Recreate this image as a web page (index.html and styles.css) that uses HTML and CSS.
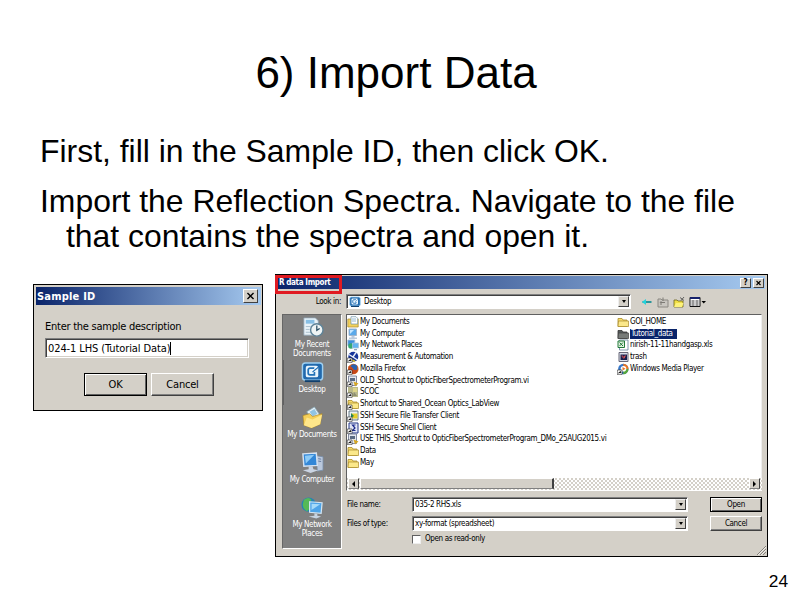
FILE: index.html
```html
<!DOCTYPE html>
<html lang="en">
<head>
    <meta charset="UTF-8">
    <meta name="viewport" content="width=device-width, initial-scale=1.0">
    <title>6) Import Data</title>
    <link rel="stylesheet" href="styles.css">
</head>
<body>
    <svg class="defs" width="0" height="0">
        <symbol id="folder" viewBox="0 0 12 12">
            <path d="M1 2.5h4l1 1.5h4v6.5H1z" fill="#f6dc6c" stroke="#a98b2c" stroke-width=".8"/>
            <path d="M1 10.5 1.5 5H11.500v5.500z" fill="#fbe88a" stroke="#a98b2c" stroke-width=".7"/>
        </symbol>
        <symbol id="folder-dark" viewBox="0 0 12 12">
            <path d="M1 2.5h4l1 1.5h4v6.5H1z" fill="#555b5b" stroke="#333" stroke-width=".8"/>
            <path d="M1 10.5 1.5 5H11.500v5.500z" fill="#777b78" stroke="#444" stroke-width=".7"/>
        </symbol>
        <symbol id="docs" viewBox="0 0 12 12">
            <path d="M.8 3h10.4v8H.8z" fill="#f2d15c" stroke="#a98b2c" stroke-width=".7"/>
            <path d="M4 .7h5l1.6 1.6V8H4z" fill="#fff" stroke="#6f93a8" stroke-width=".7"/>
            <path d="M5 3h4M5 5h4" stroke="#7aa7c8" stroke-width=".8"/>
        </symbol>
        <symbol id="computer" viewBox="0 0 12 12">
            <path d="M2 1h7.5v6.5H2z" fill="#5aa9ea" stroke="#9fb6cf"/>
            <path d="M3 2h4L3 6z" fill="#c4e6ff"/>
            <path d="M4.5 8h3v1.5h2.5v1.5H2V9.500h2.500z" fill="#b9c9dc"/>
        </symbol>
        <symbol id="network" viewBox="0 0 12 12">
            <path d="M.8 1h7v5.500h-7z" fill="#3d8fdc" stroke="#a9c4dc" stroke-width=".8"/>
            <circle cx="4" cy="7" r="2.800" fill="#35a872"/>
            <path d="M5.500 4h6v5h-6z" fill="#62b4f0" stroke="#a9c4dc" stroke-width=".8"/>
            <path d="M7 10h3v1.300H7z" fill="#8da6bd"/>
        </symbol>
        <symbol id="arrow" viewBox="0 0 12 12">
            <path d="M.3 7h4.700v4.700H.3z" fill="#fff" stroke="#222" stroke-width=".6"/>
            <path d="M1.400 10.800C1.300 9 2 8.700 3 8.700V7.800L4.500 9.200 3 10.500V9.700" fill="#111"/>
        </symbol>
        <symbol id="globe" viewBox="0 0 12 12">
            <circle cx="6.300" cy="5.800" r="5" fill="#17349a"/>
            <path d="M2 3.500 6 6 9 1.500M6 6l4.500 3" stroke="#e9eef8" stroke-width="1.400" fill="none"/>
            <path d="M3 8 8 10.500" stroke="#d9c42e" stroke-width="1.500"/>
        </symbol>
        <symbol id="firefox" viewBox="0 0 12 12">
            <circle cx="6.300" cy="6" r="5.300" fill="#d9641c"/>
            <circle cx="6.800" cy="4.800" r="3.500" fill="#2a62b0"/>
            <path d="M1.500 3c2 1 3 0 4 2s3 3 5.500 1c-1 4-3 5-5 5s-4-1-4.500-4z" fill="#c4471c"/>
        </symbol>
        <symbol id="vi" viewBox="0 0 12 12">
            <path d="M1.500 1h8v9.500h-8z" fill="#e4e8ef" stroke="#66708a" stroke-width=".8"/>
            <path d="M3 3h5v3H3z" fill="#5a6a82"/>
            <path d="M6.500 6.500 11.500 8.500 8 11.500z" fill="#d6a722"/>
        </symbol>
        <symbol id="scoc" viewBox="0 0 12 12">
            <path d="M1 1h10v10H1z" fill="#b9b98c"/>
            <path d="M6 2h4v4H6z" fill="#ddd58a"/>
            <path d="M7 6 10 10H6z" fill="#8d8e72"/>
        </symbol>
        <symbol id="ssh" viewBox="0 0 12 12">
            <path d="M2 1h9v9H2z" fill="#e8eef4" stroke="#47606e" stroke-width=".8"/>
            <path d="M4.500 3.500h6v5h-6z" fill="#e5cf2b"/>
            <path d="M4 3 7 6 4 8z" fill="#248556"/>
        </symbol>
        <symbol id="shell" viewBox="0 0 12 12">
            <path d="M2 1h9v10H2z" fill="#e2e6f5" stroke="#233687"/>
            <path d="M8.500 3H5.500L8 6 5.500 8.500h3" stroke="#1c2c8c" stroke-width="1.200" fill="none"/>
        </symbol>
        <symbol id="xls" viewBox="0 0 12 12">
            <path d="M2.500 1h8.500v10H2.500z" fill="#fff" stroke="#5f7e9b" stroke-width=".8"/>
            <path d="M1 2h6.500v6.500H1z" fill="#dff0df" stroke="#227a3b"/>
            <path d="m2.500 3.500 3.500 3.500m0-3.500L2.500 7" stroke="#227a3b"/>
        </symbol>
        <symbol id="trash" viewBox="0 0 12 12">
            <path d="M2 1.500h9v9H2z" fill="#d9dde8" stroke="#667"/>
            <path d="M3.500 3.500H10V9H3.500z" fill="#151e4c"/>
            <path d="M4.500 5h1.500v2h1.500V5H9" stroke="#e55" stroke-width=".8" fill="none"/>
        </symbol>
        <symbol id="player" viewBox="0 0 12 12">
            <circle cx="6.300" cy="6" r="5.200" fill="#3a79c9"/>
            <path d="M6.300.8a5.200 5.200 0 0 1 5.200 5.200H6.300z" fill="#e77524"/>
            <path d="M11.500 6a5.200 5.200 0 0 1-5.200 5.200V6z" fill="#58a83b"/>
            <circle cx="6.500" cy="5.800" r="2.800" fill="#fff"/>
            <path d="m5.500 4 3 1.800-3 1.800z" fill="#e77524"/>
        </symbol>
        <symbol id="desktop" viewBox="0 0 24 24">
            <rect x="1.500" y="2" width="21" height="18" rx="3" fill="#2169ad" stroke="#9ed0f2" stroke-width="1.500"/>
            <path d="M4 21h16" stroke="#12406d" stroke-width="2"/>
            <rect x="5" y="5" width="13" height="12" rx="2" fill="#e9f5fd"/>
            <path d="M14 7.500H9.500c-1.500 0-2 1-2 2v3c0 1.500.5 2 2 2H14v-3" stroke="#2272b8" stroke-width="1.800" fill="none"/>
            <path d="m12 11 5-4" stroke="#fff" stroke-width="2.400"/>
            <path d="m12 11.500 6-5" stroke="#2272b8" stroke-width="1.200"/>
        </symbol>
    </svg>

    <main class="slide">
        <h1>6) Import Data</h1>
        <p class="step first">First, fill in the Sample ID, then click OK.</p>
        <p class="step second">Import the Reflection Spectra. Navigate to the file<br><span>that contains the spectra and open it.</span></p>

        <div class="figures">
            <section class="window sample">
                <div class="titlebar">
                    <span>Sample ID</span>
                    <svg class="close" viewBox="0 0 15 13"><path d="m4 3 7 7m0-7-7 7" stroke="#000" stroke-width="1.600"/></svg>
                </div>
                <div class="sample-body">
                    <label>Enter the sample description</label>
                    <div class="field"><span>024-1 LHS (Tutorial Data)</span><i class="caret"></i></div>
                    <div class="actions">
                        <div class="btn default">OK</div>
                        <div class="btn cancel">Cancel</div>
                    </div>
                </div>
            </section>

            <section class="window import">
                <div class="titlebar">
                    <span>R data Import</span>
                    <div class="title-buttons"><b>?</b><b><svg viewBox="0 0 10 10"><path d="m2.500 2.500 5 5m0-5-5 5" stroke="#000" stroke-width="1.400"/></svg></b></div>
                    <div class="highlight"></div>
                </div>

                <div class="lookin">
                    <label>Look in:</label>
                    <div class="combo">
                        <svg class="ico"><use href="#desktop"/></svg>
                        <span>Desktop</span>
                        <i class="drop"></i>
                    </div>
                    <div class="tools">
                        <svg viewBox="0 0 12 12"><path d="M1.500 6h9" stroke="#1b8f96" stroke-width="1.800"/><path d="M1 6 5 3v6z" fill="#23d3dc"/></svg>
                        <svg viewBox="0 0 12 12"><path d="M1 3h3l1 1h6v7H1z" fill="#c9c6c0" stroke="#8b8882"/><path d="M4 9V6.500h4M6 1.500V5M3 7l1-1.500L5.500 7" stroke="#7d7a75" fill="none"/></svg>
                        <svg viewBox="0 0 12 12"><path d="M1 4h3l1 1h5v6H1z" fill="#f1df45" stroke="#6d661c" stroke-width=".8"/><path d="m7 1.500 4 3M11 1 8 4.500" stroke="#444" stroke-width=".8"/><path d="m1 11 2-4h7.500L9 11z" fill="#fdf27b"/></svg>
                        <svg class="views" viewBox="0 0 17 12"><path d="M1 1.500h10v9H1z" fill="#fff" stroke="#111"/><path d="M1 2h10" stroke="#16216b" stroke-width="2"/><path d="M2.500 5h3m1 0h3m-7 2h3m1 0h3m-7 2h3m1 0h3" stroke="#333"/><path d="M12.500 5h4.500l-2.250 2.500z"/></svg>
                    </div>
                </div>

                <div class="browser">
                    <nav class="places">
                        <div class="place">
                            <svg viewBox="0 0 24 24"><path d="M3 2h12l3 3v15H3z" fill="#e8f2f8" stroke="#8fa5b6" stroke-width=".8"/><path d="M5 4h9v4H5z" fill="#87bfe5"/><path d="M5 11h5m-5 3h4m-4 3h5" stroke="#a9bfce"/><circle cx="16.500" cy="14.500" r="6.500" fill="#eef4f5" stroke="#5e8398" stroke-width="1.500"/><path d="M16.500 10v5l3-2" stroke="#284c62" stroke-width="1.300" fill="none"/></svg>
                            <span>My Recent<br>Documents</span>
                        </div>
                        <div class="place selected">
                            <svg><use href="#desktop"/></svg>
                            <span>Desktop</span>
                        </div>
                        <div class="place">
                            <svg viewBox="0 0 24 24"><path d="m6 6 8-5 6 9-5 8z" fill="#e5f1f8" stroke="#8aabba" stroke-width=".8"/><path d="m9 6 5-3 3 5-5 3z" fill="#91c4e2"/><path d="m2 10 7-2 3 3 10-3-2 11-9 4-8-3z" fill="#f5cf58" stroke="#aa8628" stroke-width=".7"/><path d="m3 20 3-8 6 2 10-5-2 10-9 4z" fill="#ffe78b"/></svg>
                            <span>My Documents</span>
                        </div>
                        <div class="place">
                            <svg viewBox="0 0 24 24"><path d="m16 5 7 1v14l-6 1z" fill="#bac8dc" stroke="#7489a5" stroke-width=".8"/><path d="m18 8 3 .5m-3 2 3 .5" stroke="#647aa0"/><path d="m2 3 14-1 1 13-14 1z" fill="#3387d7" stroke="#d5e2f1" stroke-width="1.500"/><path d="m4 5 10-1L5 13z" fill="#8dcbf7"/><path d="m8 16 4 0 1 3 5 1-8 3-8-3 6-1z" fill="#cad4e3"/></svg>
                            <span>My Computer</span>
                        </div>
                        <div class="place">
                            <svg viewBox="0 0 24 24"><circle cx="8" cy="9" r="7.500" fill="#2583b4"/><path d="M3 4q5-4 8 0L8 8l3 4-5 4q-5-4-4-8z" fill="#55b957"/><path d="m9 6 13 1-1 11-12-1z" fill="#4da4e8" stroke="#d2e5f2" stroke-width="1.300"/><path d="m11 8 9 .5-9 6z" fill="#a5daf9"/><path d="m14 18 3 .5v2l4 1-5 2-8-2 6-1z" fill="#c6d4e2"/></svg>
                            <span>My Network<br>Places</span>
                        </div>
                    </nav>

                    <div class="filepane">
                        <div class="files">
                            <ul>
                                <li><svg><use href="#docs"/></svg><span>My Documents</span></li>
                                <li><svg><use href="#computer"/></svg><span>My Computer</span></li>
                                <li><svg><use href="#network"/></svg><span>My Network Places</span></li>
                                <li><svg><use href="#globe"/><use href="#arrow"/></svg><span>Measurement &amp; Automation</span></li>
                                <li><svg><use href="#firefox"/><use href="#arrow"/></svg><span>Mozilla Firefox</span></li>
                                <li><svg><use href="#vi"/><use href="#arrow"/></svg><span>OLD_Shortcut to OpticFiberSpectrometerProgram.vi</span></li>
                                <li><svg><use href="#scoc"/><use href="#arrow"/></svg><span>SCOC</span></li>
                                <li><svg><use href="#folder"/><use href="#arrow"/></svg><span>Shortcut to Shared_Ocean Optics_LabView</span></li>
                                <li><svg><use href="#ssh"/><use href="#arrow"/></svg><span>SSH Secure File Transfer Client</span></li>
                                <li><svg><use href="#shell"/><use href="#arrow"/></svg><span>SSH Secure Shell Client</span></li>
                                <li><svg><use href="#vi"/><use href="#arrow"/></svg><span>USE THIS_Shortcut to OpticFiberSpectrometerProgram_DMo_25AUG2015.vi</span></li>
                                <li><svg><use href="#folder"/></svg><span>Data</span></li>
                                <li><svg><use href="#folder"/></svg><span>May</span></li>
                            </ul>
                            <ul>
                                <li><svg><use href="#folder"/></svg><span>GOI_HOME</span></li>
                                <li class="active"><svg><use href="#folder-dark"/></svg><span>Tutorial_data</span></li>
                                <li><svg><use href="#xls"/></svg><span>nirish-11-11handgasp.xls</span></li>
                                <li><svg><use href="#trash"/></svg><span>trash</span></li>
                                <li><svg><use href="#player"/><use href="#arrow"/></svg><span>Windows Media Player</span></li>
                            </ul>
                        </div>
                        <div class="scrollbar">
                            <i class="left"></i>
                            <div class="thumb"></div>
                            <i class="right"></i>
                        </div>
                        <div class="form">
                            <label>File name:</label>
                            <div class="combo"><span>035-2 RHS.xls</span><i class="drop"></i></div>
                            <div class="btn default">Open</div>
                            <label>Files of type:</label>
                            <div class="combo"><span>xy-format (spreadsheet)</span><i class="drop"></i></div>
                            <div class="btn">Cancel</div>
                        </div>
                        <div class="readonly"><i class="check"></i><span>Open as read-only</span></div>
                    </div>
                </div>
                <svg class="grip" viewBox="0 0 9 9"><path d="M0 9 9 0M3 9 9 3M6 9 9 6" stroke="#85817a"/><path d="m1 9 8-8M4 9l5-5" stroke="#fff" stroke-width=".6"/></svg>
            </section>
        </div>
        <div class="page-number">24</div>
    </main>
</body>
</html>
```
FILE: styles.css
```css
* {
    box-sizing: border-box;
}
body {
    margin: 0;
    background: #fff;
    color: #000;
    font-family: "Liberation Sans", Arial, sans-serif;
}
.defs {
    position: absolute;
}
.slide {
    position: relative;
    width: 794px;
    height: 595px;
    overflow: hidden;
    padding-top: 48px;
}
h1 {
    margin: 0;
    padding-right: 2px;
    height: 50px;
    font-size: 44px;
    line-height: 50px;
    font-weight: 400;
    text-align: center;
}
.step {
    margin: 0 0 0 40px;
    font-size: 31.900px;
    line-height: 35px;
    white-space: nowrap;
}
.first {
    margin-top: 36px;
}
.second {
    margin-top: 15px;
}
.second span {
    margin-left: 26px;
}
.figures {
    display: flex;
    align-items: flex-start;
    gap: 12px;
    margin: 20px 0 0 33px;
}
.window {
    background: #d4d0c8;
    border: 1px solid #000;
    font-family: "DejaVu Sans Condensed", "DejaVu Sans", sans-serif;
}
.titlebar {
    display: flex;
    align-items: center;
    justify-content: space-between;
    color: #fff;
    font-weight: bold;
    background: linear-gradient(90deg, #0a246a, #a6caf0);
}

/* sample id dialog */
.sample {
    width: 230px;
    height: 127px;
    margin-top: 10px;
    padding: 2px 1px 0 2px;
    border-width: 1px 1.500px 1.500px 1px;
    font-size: 11px;
}
.sample .titlebar {
    height: 18px;
    padding: 0 3px 0 1px;
    letter-spacing: 0.2px;
}
.close {
    width: 15px;
    height: 14px;
    background: #d4d0c8;
    border: 1px solid #fff;
    border-right-color: #404040;
    border-bottom-color: #404040;
}
.sample-body {
    padding: 15px 12px 0 9px;
}
.sample-body label {
    display: block;
    line-height: 13px;
    letter-spacing: -0.250px;
}
.field {
    display: flex;
    align-items: center;
    height: 20px;
    margin-top: 5px;
    padding-left: 2px;
    background: #fff;
    border: 1px solid #808080;
    border-right-color: #fff;
    border-bottom-color: #fff;
    box-shadow: inset 1px 1px #404040, inset -1px -1px #d4d0c8;
    letter-spacing: -0.100px;
}
.caret {
    width: 1px;
    height: 13px;
    background: #000;
}
.actions {
    display: flex;
    gap: 4px;
    margin: 15px 0 0 39px;
}
.btn {
    display: flex;
    align-items: center;
    justify-content: center;
    background: #d4d0c8;
    border: 1px solid #fff;
    border-right-color: #404040;
    border-bottom-color: #404040;
    box-shadow: inset -1px -1px #808080;
}
.btn.default {
    border-color: #000;
    box-shadow: inset 1px 1px #fff, inset -1px -1px #606060;
}
.sample .btn {
    width: 63px;
    height: 23px;
    letter-spacing: -0.200px;
}

/* file dialog */
.import {
    position: relative;
    width: 493px;
    height: 283px;
    padding: 1px 2px 0;
    font-size: 8px;
    line-height: 10px;
    letter-spacing: -0.360px;
}
.import .titlebar {
    position: relative;
    height: 13px;
    padding: 0 1px 0 1px;
}
.highlight {
    position: absolute;
    left: -3px;
    top: -1px;
    width: 67px;
    height: 19px;
    border: 3px solid #e01b22;
}
.title-buttons {
    display: flex;
    gap: 2px;
}
.title-buttons b {
    width: 11px;
    height: 10px;
    background: #d4d0c8;
    border: 1px solid #fff;
    border-right-color: #404040;
    border-bottom-color: #404040;
    color: #000;
    font-size: 8px;
    line-height: 8px;
    text-align: center;
}
.title-buttons svg {
    display: block;
    width: 9px;
    height: 8px;
}
.lookin {
    display: flex;
    align-items: center;
    height: 15px;
    margin-top: 5px;
}
.lookin label {
    width: 68px;
    padding-right: 5px;
    text-align: right;
}
.combo {
    display: flex;
    align-items: center;
    height: 15px;
    padding: 0 1px 0 2px;
    background: #fff;
    border: 1px solid #808080;
    border-right-color: #fff;
    border-bottom-color: #fff;
    box-shadow: inset 1px 1px #404040;
}
.lookin .combo {
    width: 285px;
}
.ico {
    width: 12px;
    height: 12px;
    margin-right: 3px;
}
.drop {
    display: flex;
    align-items: center;
    justify-content: center;
    width: 11px;
    height: 11px;
    margin-left: auto;
    background: #d4d0c8;
    border: 1px solid #eee;
    border-right-color: #404040;
    border-bottom-color: #404040;
}
.drop::after {
    content: "";
    border: 2.500px solid transparent;
    border-top: 3px solid #000;
    border-bottom: 0;
}
.tools {
    display: flex;
    gap: 4px;
    margin-left: 10px;
}
.tools svg {
    width: 12px;
    height: 12px;
}
.tools .views {
    width: 17px;
}
.browser {
    display: flex;
    gap: 4px;
    margin: 5px 0 0 4px;
}
.places {
    width: 60px;
    height: 235px;
    background: #808080;
    border: 1px solid #666;
    border-right-color: #fff;
    border-bottom-color: #fff;
}
.place {
    display: flex;
    flex-direction: column;
    align-items: center;
    height: 45px;
    padding-top: 1px;
    color: #fff;
    line-height: 9px;
    text-align: center;
    white-space: nowrap;
}
.place svg {
    width: 23px;
    height: 23px;
    margin-bottom: 1px;
    flex: none;
}
.selected {
    border-left: 1px solid #606060;
    border-right: 1px solid #eee;
}
.filepane {
    width: 416px;
}
.files {
    display: flex;
    height: 164px;
    padding-top: 1px;
    background: #fff;
    border: 1px solid #606060;
    border-right-color: #eee;
    border-bottom: 0;
}
.files ul {
    width: 270px;
    margin: 0;
    padding: 0;
    list-style: none;
}
.files ul + ul {
    width: 140px;
}
.files li {
    display: flex;
    align-items: center;
    height: 11.750px;
    white-space: nowrap;
}
.files li svg {
    width: 12px;
    height: 12px;
    margin-right: 1px;
    flex: none;
}
.active span {
    padding: 0 5px 0 1px;
    background: #0a246a;
    color: #fff;
}
.scrollbar {
    display: flex;
    justify-content: space-between;
    height: 13px;
    padding: 0 2px 1px 1px;
    background: conic-gradient(#fff 25%, #d4d0c8 0 50%, #fff 0 75%, #d4d0c8 0) 0 0 / 4px 4px;
    border-left: 1px solid #606060;
    border-bottom: 1px solid #fff;
}
.scrollbar i, .thumb {
    background: #d4d0c8;
    border: 1px solid #fff;
    border-right-color: #404040;
    border-bottom-color: #808080;
}
.scrollbar i {
    display: flex;
    align-items: center;
    justify-content: center;
    width: 11px;
}
.scrollbar i::after {
    content: "";
    border: 3px solid transparent;
}
.scrollbar .left::after {
    border-right-color: #000;
    border-left: 0;
}
.scrollbar .right::after {
    border-left-color: #000;
    border-right: 0;
}
.thumb {
    width: 194px;
    margin: 0 auto 0 1px;
    border-right-width: 2px;
}
.form {
    display: grid;
    grid-template-columns: 66px 276px 52px;
    grid-auto-rows: 15px;
    row-gap: 4px;
    align-items: center;
    margin-top: 6px;
}
.form label {
    padding-left: 1px;
}
.form .btn {
    width: 52px;
    height: 15px;
    margin-left: 22px;
}
.readonly {
    display: flex;
    align-items: center;
    gap: 4px;
    height: 10px;
    margin: 3px 0 0 66px;
}
.check {
    width: 9px;
    height: 9px;
    background: #fff;
    border: 1px solid #606060;
    border-right-color: #eee;
    border-bottom-color: #eee;
}
.grip {
    position: absolute;
    right: 1px;
    bottom: 1px;
    width: 9px;
    height: 9px;
}
.page-number {
    position: absolute;
    right: 6px;
    bottom: 4px;
    font-size: 17.300px;
    line-height: 20px;
}
```
